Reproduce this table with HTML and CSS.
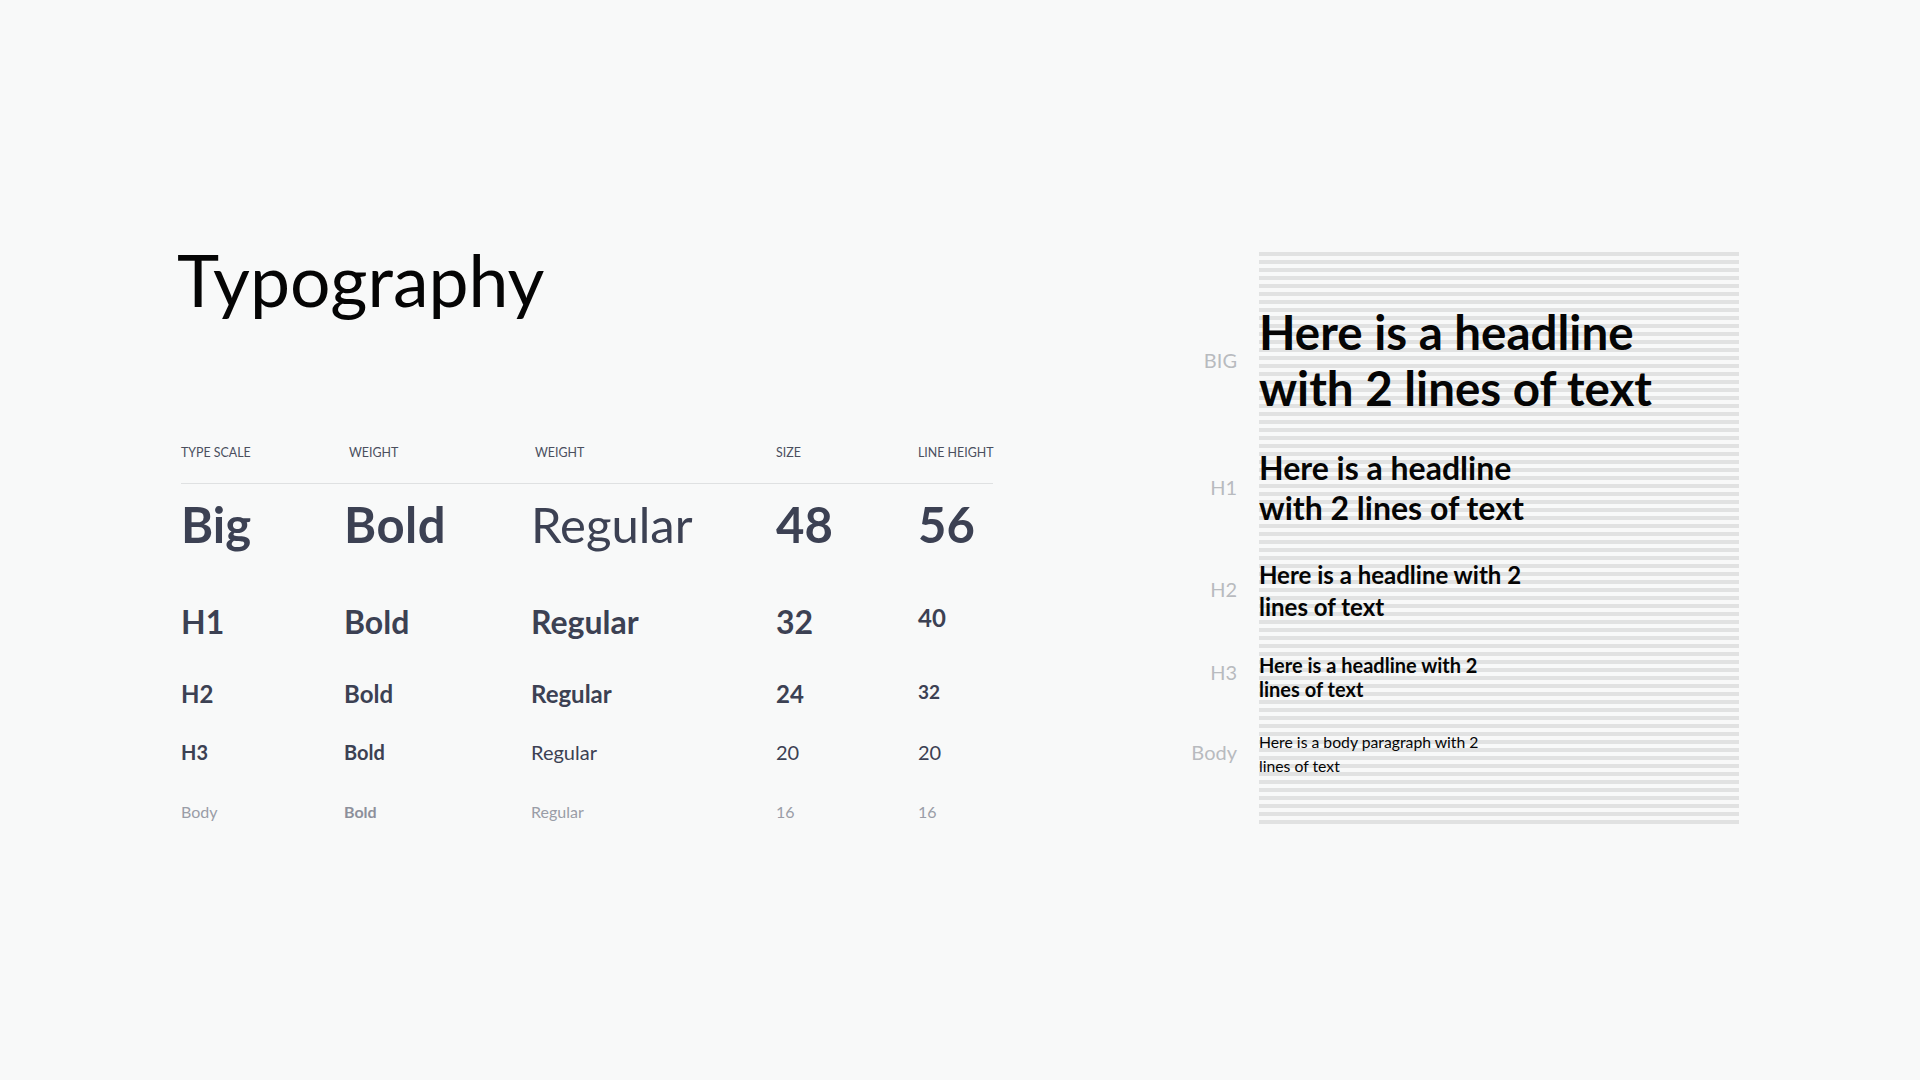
FILE: index.html
```html
<!DOCTYPE html>
<html lang="en">
<head>
<meta charset="utf-8">
<title>Typography</title>
<link rel="stylesheet" href="styles.css">
</head>
<body>
<main class="page">
  <section class="left">
    <h1 class="title">Typography</h1>
    <div class="table">
      <div class="row head">
        <div class="cell">Type scale</div>
        <div class="cell shift5">Weight</div>
        <div class="cell shift4">Weight</div>
        <div class="cell">Size</div>
        <div class="cell">Line height</div>
      </div>
      <div class="row big">
        <div class="cell b">Big</div>
        <div class="cell b">Bold</div>
        <div class="cell r">Regular</div>
        <div class="cell b">48</div>
        <div class="cell b">56</div>
      </div>
      <div class="row h1">
        <div class="cell b">H1</div>
        <div class="cell b">Bold</div>
        <div class="cell b">Regular</div>
        <div class="cell b">32</div>
        <div class="cell b lh">40</div>
      </div>
      <div class="row h2">
        <div class="cell b">H2</div>
        <div class="cell b">Bold</div>
        <div class="cell b">Regular</div>
        <div class="cell b">24</div>
        <div class="cell b lh">32</div>
      </div>
      <div class="row h3">
        <div class="cell b">H3</div>
        <div class="cell b">Bold</div>
        <div class="cell r">Regular</div>
        <div class="cell r">20</div>
        <div class="cell r">20</div>
      </div>
      <div class="row body">
        <div class="cell r">Body</div>
        <div class="cell b">Bold</div>
        <div class="cell r">Regular</div>
        <div class="cell r">16</div>
        <div class="cell r">16</div>
      </div>
    </div>
  </section>
  <section class="right">
    <div class="sample s-big">
      <div class="label">BIG</div>
      <div class="text">Here is a headline<br>with 2 lines of text</div>
    </div>
    <div class="sample s-h1">
      <div class="label">H1</div>
      <div class="text">Here is a headline<br>with 2 lines of text</div>
    </div>
    <div class="sample s-h2">
      <div class="label">H2</div>
      <div class="text">Here is a headline with 2<br>lines of text</div>
    </div>
    <div class="sample s-h3">
      <div class="label">H3</div>
      <div class="text">Here is a headline with 2<br>lines of text</div>
    </div>
    <div class="sample s-body">
      <div class="label">Body</div>
      <div class="text">Here is a body paragraph with 2<br>lines of text</div>
    </div>
  </section>
</main>
</body>
</html>
```

FILE: styles.css
```css
* { box-sizing: border-box; }

html, body {
  margin: 0;
  padding: 0;
}

body {
  background: #f8f9f9;
  font-family: Lato, "Noto Sans", sans-serif;
  width: 1920px;
  height: 1080px;
  overflow: hidden;
}

.page {
  display: flex;
  align-items: flex-start;
  padding: 236px 0 0 177px;
}

.left {
  width: 1003px;
  flex: none;
}

.title {
  margin: 0;
  font-size: 71.5px;
  line-height: 86px;
  font-weight: 400;
  color: #050505;
}

.table {
  margin: 123px 0 0 4px;
  width: 812px;
  color: #3c4153;
}

.row {
  display: grid;
  grid-template-columns: 163px 187px 245px 142px 1fr;
  align-items: start;
}

.cell { white-space: nowrap; line-height: 1; }
.b { font-weight: 700; }
.r { font-weight: 400; }

.head {
  font-size: 12.4px;
  text-transform: uppercase;
  color: #4a4f5e;
  padding-bottom: 22px;
  border-bottom: 1px solid #dfe1e2;
}
.head .cell { line-height: 16px; }
.shift5 { padding-left: 5px; }
.shift4 { padding-left: 4px; }

.big { font-size: 49px; margin-top: 16px; }
.big .b:nth-child(2) { letter-spacing: 0.5px; }
.h1 { font-size: 32px; margin-top: 57px; }
.h1 .lh { font-size: 24px; }
.h2 { font-size: 24px; margin-top: 44px; }
.h2 .lh { font-size: 19px; }
.h3 { font-size: 20px; margin-top: 36px; }
.body { font-size: 16px; margin-top: 42px; color: #9a9da7; }
.body .b { color: #8d909b; }

.right {
  width: 559px;
  flex: none;
  margin-top: 16px;
  height: 572px;
  padding-top: 52px;
  display: flex;
  flex-direction: column;
  background-image: repeating-linear-gradient(to bottom, #e1e2e2 0, #e1e2e2 4px, transparent 4px, transparent 8px);
  background-repeat: no-repeat;
  background-position: 79px 0;
  background-size: 480px 100%;
}

.sample {
  display: flex;
  align-items: center;
  gap: 22px;
}

.s-h1 { margin-top: 32px; }
.s-h2 { margin-top: 31px; }
.s-h3 { margin-top: 30px; }
.s-body { margin-top: 29px; }

.label {
  width: 57px;
  flex: none;
  text-align: right;
  font-size: 20px;
  line-height: 24px;
  font-weight: 400;
  color: #b8bbbf;
}

.s-h1 .label { margin-bottom: 2px; }
.s-h2 .label { margin-bottom: 5px; }
.s-h3 .label { margin-bottom: 10px; }
.s-body .label { margin-bottom: 5px; }

.text {
  color: #050505;
  font-weight: 700;
  white-space: nowrap;
}

.s-big .text { font-size: 47.5px; line-height: 56px; }
.s-h1 .text { font-size: 32px; line-height: 40px; }
.s-h2 .text { font-size: 24px; line-height: 32px; }
.s-h3 .text { font-size: 20px; line-height: 24px; }
.s-body .text { font-size: 15.75px; line-height: 24px; font-weight: 400; }
```
